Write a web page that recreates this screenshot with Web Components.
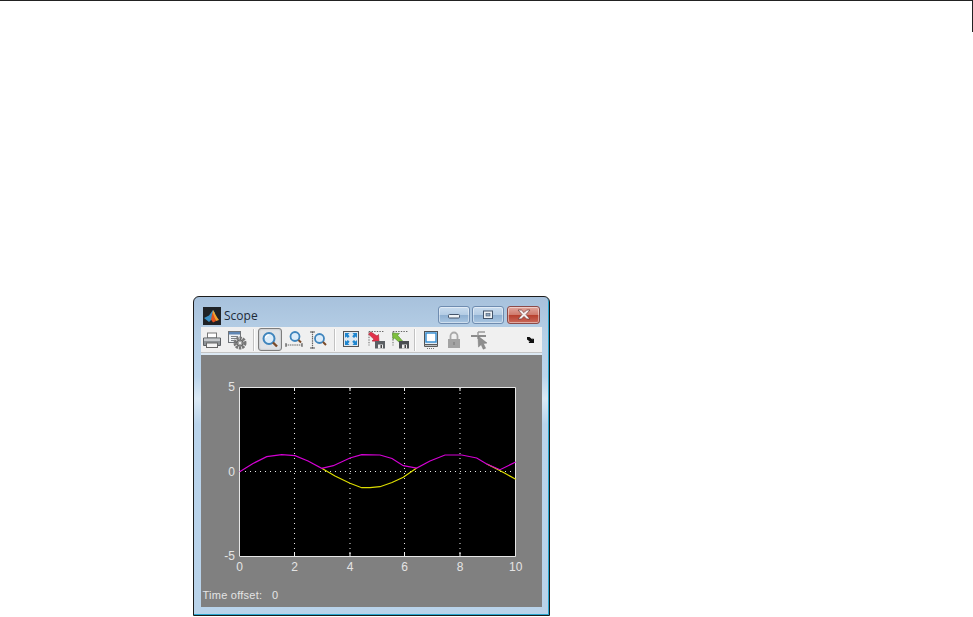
<!DOCTYPE html>
<html>
<head>
<meta charset="utf-8">
<title>Scope</title>
<style>
html, body { margin: 0; background: #fff; }
</style>
</head>
<body>
<doc-page>
  <scope-window>
    <span slot="title">Scope</span>
    <scope-toolbar slot="toolbar"></scope-toolbar>
    <scope-plot></scope-plot>
  </scope-window>
</doc-page>
<script>
// page: rule along the top, then the figure
class DocPage extends HTMLElement {
  constructor() {
    super();
    this.attachShadow({ mode: 'open' }).innerHTML = `
      <style>
        :host { display: block; width: 973px; height: 617px; box-sizing: border-box; overflow: hidden; }
        .rule { height: 32px; border-top: 1px solid #222; border-right: 1px solid #222; box-sizing: border-box; }
        .fig { padding: 264px 0 0 193px; }
      </style>
      <div class="rule"></div>
      <div class="fig"><slot></slot></div>`;
  }
}

class WindowButtons extends HTMLElement {
  constructor() {
    super();
    this.attachShadow({ mode: 'open' }).innerHTML = `
      <style>
        :host { display: flex; gap: 2px; }
        .b { width: 32px; height: 18px; box-sizing: border-box; border: 1px solid #6f8cb0; border-radius: 3px;
             box-shadow: inset 0 0 0 1px rgba(255,255,255,.45);
             background: linear-gradient(#c9dcef 0, #b4cce4 48%, #8fb0d2 52%, #a9c6e2 100%);
             display: flex; align-items: center; justify-content: center; }
        .x { width: 33px; margin-left: 1px; border-color: #8c4a48;
             background: linear-gradient(#e2a79e 0, #cf7b6d 48%, #b8402e 52%, #c9695b 100%); }
      </style>
      <div class="b"><svg width="14" height="8" viewBox="0 0 14 8"><rect x="1.5" y="3.500" width="11" height="3.500" rx="1" fill="#eef2f6" stroke="#44546a"/></svg></div>
      <div class="b"><svg width="12" height="10" viewBox="0 0 12 10"><rect x="1.500" y="1" width="9" height="7.500" fill="#eef2f6" stroke="#44546a"/><rect x="4" y="3.500" width="4" height="2.500" fill="#8ea6c0" stroke="#44546a" stroke-width=".6"/></svg></div>
      <div class="b x"><svg width="16" height="11" viewBox="0 0 16 11"><path d="M2 1h3.400L8 3.600 10.600 1H14l-4 4.500 4 4.500h-3.400L8 7.400 5.400 10H2l4-4.500z" fill="#f4eeee" stroke="#6e3a38" stroke-width=".7"/></svg></div>`;
  }
}

// the toolbar glyphs, all on a 20x20 box
const ICONS = {
  print: `<rect x="5.500" y="3" width="9" height="5" fill="#fff" stroke="#777"/><path d="M1.500 8h17v7.500h-17z" fill="#8d9296" stroke="#5c6064"/><rect x="2" y="8.500" width="16" height="2.500" fill="#c6c9cc"/><rect x="4.500" y="13" width="11" height="4.500" fill="#f4f4f4" stroke="#666"/>`,
  params: `<rect x="1.500" y="1.500" width="12" height="11" fill="#eef1f4" stroke="#6f7378"/><rect x="2" y="2" width="11" height="2.500" fill="#5f86b4"/><path d="M4 6.500h7M4 8.500h5M4 10.500h3" stroke="#7d8288"/><circle cx="13" cy="13" r="5" fill="none" stroke="#777" stroke-width="3" stroke-dasharray="2.400 .8"/><circle cx="13" cy="13" r="3.200" fill="#a2a2a2" stroke="#5c5c5c"/><circle cx="13" cy="13" r="1.200" fill="#eee"/>`,
  zoom: `<circle cx="9" cy="8.500" r="5.500" fill="#dcecf9" stroke="#3f85bd" stroke-width="2"/><path d="M5.500 8a3.500 3.500 0 0 1 3.500-3" fill="none" stroke="#fff" stroke-width="1.200"/><path d="M13 12.500l4 4" stroke="#7b4a28" stroke-width="2.400"/>`,
  zoomx: `<circle cx="11" cy="6.500" r="4.500" fill="#dcecf9" stroke="#3f85bd" stroke-width="1.800"/><path d="M14.500 10l2.500 2.500" stroke="#7b4a28" stroke-width="2"/><path d="M1.500 15h17" stroke="#666" stroke-width="1.200" stroke-dasharray="1.500 .7"/><path d="M2 13v4M18 13v4" stroke="#555"/>`,
  zoomy: `<path d="M4.500 1.500v17" stroke="#666" stroke-width="1.200" stroke-dasharray="1.500 .7"/><path d="M2 2h5M2 18h5" stroke="#555"/><circle cx="11.500" cy="8.500" r="4.500" fill="#dcecf9" stroke="#3f85bd" stroke-width="1.800"/><path d="M15 12l3 3" stroke="#7b4a28" stroke-width="2"/>`,
  fit: `<rect x="2.500" y="1.500" width="15" height="15" fill="#dfe8f0" stroke="#555"/><path d="M4 3h4.500L7 4.600l1.600 1.600-1.800 1.800L5.200 6.400 4 8zM16 3v5l-1.400-1.600-1.600 1.600-1.800-1.800 1.600-1.600L11.500 3zM4 15v-5l1.200 1.600 1.600-1.600 1.800 1.800L7 13.400 8.500 15zM16 15h-4.500l1.300-1.600-1.600-1.600 1.800-1.800 1.600 1.600L16 10z" fill="#1f86cf"/>`,
  saveout: `<path d="M3 1.500h15M3 1.500v14" stroke="#666" stroke-dasharray="1.400 1.200"/><path d="M2.500 4l2.500-2 6 4 1.500-1.500.5 7-7-.5 2-1.700z" fill="#e2304a" stroke="#a8202f" stroke-width=".6"/><path d="M9 11h10v7.500H9z" fill="#5b5f63"/><rect x="12" y="14.500" width="5" height="4" fill="#eee"/><rect x="14.500" y="15" width="1.500" height="3" fill="#444"/>`,
  savein: `<path d="M3 1.500h15M3 1.500v14" stroke="#666" stroke-dasharray="1.400 1.200"/><path d="M12.500 11l-2.500 2-5.500-5L3 9.500 2.500 3l7 .5-2 1.700z" fill="#7fc03c" stroke="#4b8a2a" stroke-width=".6"/><path d="M9 11h10v7.500H9z" fill="#4a4e52"/><rect x="12" y="14.500" width="5" height="4" fill="#eee"/><rect x="14.500" y="15" width="1.500" height="3" fill="#444"/>`,
  float: `<rect x="3.500" y="1.500" width="13" height="13" fill="#e8eef4" stroke="#4e5256"/><rect x="5" y="3" width="10" height="9" fill="#fff" stroke="#2f8ad0" stroke-width="1.400"/><path d="M3.500 14.500h13v2h-13z" fill="#bcbfc2" stroke="#5a5a5a"/><path d="M6 18.500h8" stroke="#777" stroke-dasharray="1 1"/>`,
  lock: `<path d="M6.500 9V6a3.500 3.500 0 0 1 7 0v3" fill="none" stroke="#a9a9a9" stroke-width="1.800"/><rect x="4" y="9" width="12" height="9" fill="#a3a3a3"/><rect x="9" y="12" width="2" height="3" fill="#8d8d8d"/>`,
  cursor: `<path d="M2 6h15" stroke="#8c8c8c" stroke-width="2"/><path d="M9 2h7M9 2v7" stroke="#9a9a9a" stroke-width="1.400"/><path d="M9 6l9 7-3.600.6 2.200 4.600-2.400 1-2-4.600L9.500 17z" fill="#8e8e8e" stroke="#777" stroke-width=".5"/>`,
  more: `<path d="M6 7h2.500l3 2.500V8.300l1.500.7v4H8.200l-.7-1.200h1.600L6 9.500z" fill="#111"/>`
};

class ToolIcon extends HTMLElement {
  connectedCallback() {
    this.shadowRoot || this.attachShadow({ mode: 'open' });
    this.shadowRoot.innerHTML = `
      <style>
        :host { display: flex; align-items: center; justify-content: center; width: 20px; height: 23px; flex: none; box-sizing: border-box; }
        :host([pressed]) { width: 24px; border: 1px solid #7d7d7d; border-radius: 3px; background: #dfe2e6; box-shadow: inset 0 0 2px #aaa; }
        svg { display: block; }
      </style>
      <svg width="20" height="20" viewBox="0 0 20 20">${ICONS[this.getAttribute('name')] || ''}</svg>`;
  }
}

class ScopeToolbar extends HTMLElement {
  constructor() {
    super();
    this.attachShadow({ mode: 'open' }).innerHTML = `
      <style>
        :host { display: flex; align-items: center; height: 26px; box-sizing: border-box; padding: 0 0 0 1px; background: #f0f0f0; border-bottom: 1px solid #c4c4c4; }
        .sep { width: 1px; height: 22px; background: #c2c2c2; border-right: 1px solid #fff; flex: none; }
      </style>
      <tool-icon name="print"></tool-icon>
      <tool-icon name="params" style="margin-left:5px"></tool-icon>
      <div class="sep" style="margin-left:6px"></div>
      <tool-icon name="zoom" pressed style="margin-left:3px"></tool-icon>
      <tool-icon name="zoomx" style="margin-left:2px"></tool-icon>
      <tool-icon name="zoomy" style="margin-left:4px"></tool-icon>
      <div class="sep" style="margin-left:6px"></div>
      <tool-icon name="fit" style="margin-left:5px"></tool-icon>
      <tool-icon name="saveout" style="margin-left:5px"></tool-icon>
      <tool-icon name="savein" style="margin-left:4px"></tool-icon>
      <div class="sep" style="margin-left:4px"></div>
      <tool-icon name="float" style="margin-left:5px"></tool-icon>
      <tool-icon name="lock" style="margin-left:3px"></tool-icon>
      <tool-icon name="cursor" style="margin-left:5px"></tool-icon>
      <tool-icon name="more" style="margin-left:32px"></tool-icon>`;
  }
}

class ScopeWindow extends HTMLElement {
  constructor() {
    super();
    this.attachShadow({ mode: 'open' }).innerHTML = `
      <style>
        :host { display: block; width: 357px; height: 320px; box-sizing: border-box; border: 1px solid #1c1c1c; border-radius: 6px 6px 0 0;
                box-shadow: inset -1px -1px 0 #27a6cf;
                background: linear-gradient(#a7c1dc 0, #b6cfe6 12%, #bcd5ec 25%, #dbe9f5 32%, #bad4ec 40%, #b9d3ea 100%);
                padding: 0 7px 7px 7px; overflow: hidden; }
        .title { height: 30px; display: flex; align-items: center; margin-left: 2px; padding-top: 7px; box-sizing: border-box; }
        .title ::slotted(span) { font: 12px "Open Sans", "Noto Sans", sans-serif; color: #1d2a38; margin-left: 3px; }
        .logo { display: block; flex: none; }
        window-buttons { margin-left: auto; margin-right: 2px; margin-top: -2px; }
        .gap { height: 2px; background: #fff; opacity: .5; }
      </style>
      <div class="title">
        <svg class="logo" width="18" height="18" viewBox="0 0 18 18">
          <rect width="18" height="18" fill="#1f2226"/>
          <path d="M1 11l5-2.500L10 3l2 3-3 6-3 3z" fill="#3a8fc4"/>
          <path d="M10 3c1.500 2 3.500 7 6 10l-3 1c-1.500-2-3-5-3.500-8z" fill="#f2a12e"/>
          <path d="M9.500 5.500L13 14l-3 1.500-2-3z" fill="#e0521f"/>
        </svg>
        <slot name="title"></slot>
        <window-buttons></window-buttons>
      </div>
      <slot name="toolbar"></slot>
      <div class="gap"></div>
      <slot></slot>`;
  }
}

// viewBox uses page coordinates so the traces can be read straight off the reference
class ScopePlot extends HTMLElement {
  constructor() {
    super();
    const ticksX = [[239.7, '0'], [294.5, '2'], [350, '4'], [404.5, '6'], [460, '8'], [515.7, '10']];
    const grid = ticksX.slice(1, 5).map(t => `<path d="M${t[0]} 389V557" class="dots"/><path d="M${t[0]} 389v3M${t[0]} 557v-4" class="tick"/>`).join('');
    const labels = ticksX.map(t => `<text x="${t[0]}" y="571.500" text-anchor="middle">${t[1]}</text>`).join('');
    this.attachShadow({ mode: 'open' }).innerHTML = `
      <style>
        :host { display: block; width: 341px; height: 252px; background: #808080; }
        svg { display: block; }
        text { font: 12px "Liberation Sans", Arial, sans-serif; fill: #e4e4e4; }
        .small { font-size: 11px; letter-spacing: .25px; }
        .dots { stroke: #e8e8e8; stroke-dasharray: 1 4; fill: none; }
        .tick { stroke: #eee; fill: none; }
      </style>
      <svg width="341" height="252" viewBox="201 356 341 252">
        <rect x="240" y="389" width="275.500" height="168" fill="#000"/>
        ${grid}
        <path d="M240 472.500H515" class="dots"/>
        <path d="M239.500 557V388.500H515.500V557.500H239.500" fill="none" stroke="#e6e6e6"/>
        <polyline fill="none" stroke="#dcdc00" stroke-width="1.200" points="321.700,469.300 335,477 350,484.300 361.700,488.700 370,488.700 380,487.700 392,483.500 403.300,478.300 416.700,469"/>
        <polyline fill="none" stroke="#dcdc00" stroke-width="1.200" points="486.700,465 493.300,468.300 504,473.800 515.700,480.300"/>
        <polyline fill="none" stroke="#d400d4" stroke-width="1.200" points="239.700,472.700 253,464.500 266.700,457.700 281.700,455.700 295,456.700 308,462 321.700,469.300 333.300,466.700 350,459 361.700,455.700 380,456 392,459.500 403.300,466.700 416.700,469 430,462 445,456 461.700,456 476.700,459 486.700,465 500,470.700 515.700,463"/>
        <text x="235" y="391.700" text-anchor="end">5</text>
        <text x="235" y="476.700" text-anchor="end">0</text>
        <text x="235" y="561" text-anchor="end">-5</text>
        ${labels}
        <text class="small" x="202.500" y="600">Time offset:</text>
        <text class="small" x="272" y="600">0</text>
      </svg>`;
  }
}

customElements.define('doc-page', DocPage);
customElements.define('window-buttons', WindowButtons);
customElements.define('tool-icon', ToolIcon);
customElements.define('scope-toolbar', ScopeToolbar);
customElements.define('scope-window', ScopeWindow);
customElements.define('scope-plot', ScopePlot);
</script>
</body>
</html>
